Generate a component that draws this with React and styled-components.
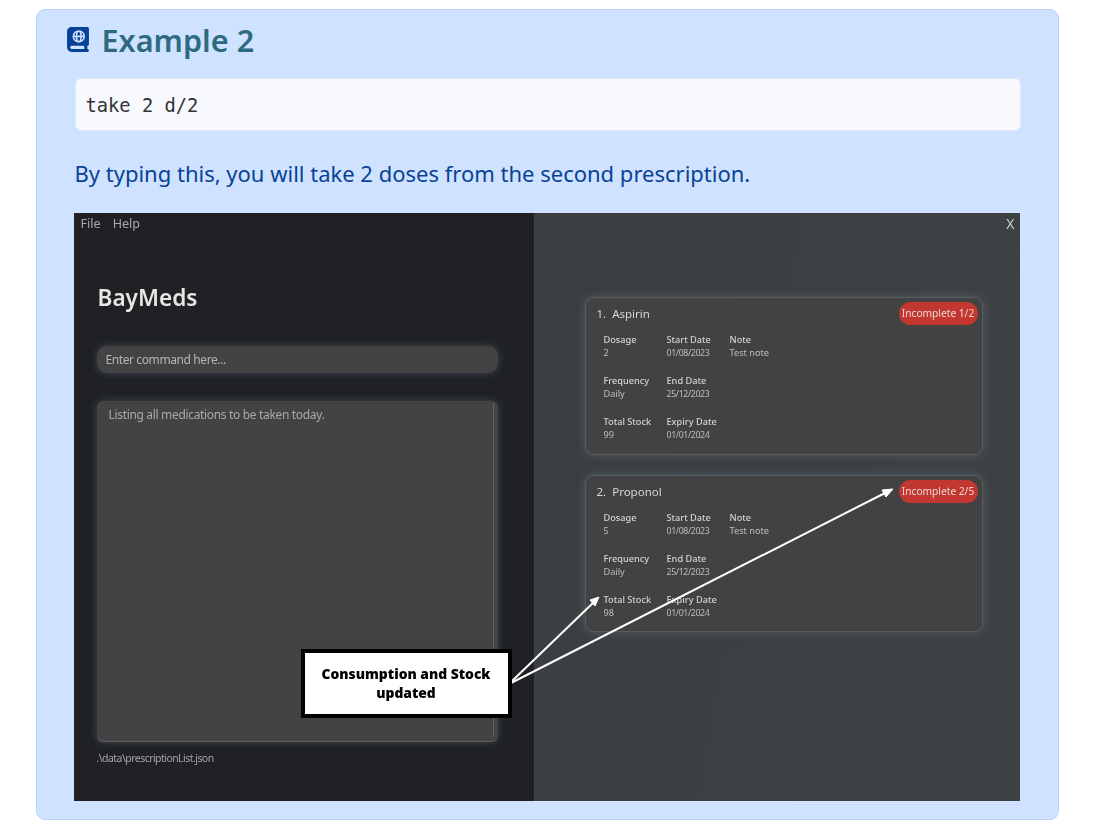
import React from "react";
import styled, { createGlobalStyle } from "styled-components";
import { FaBookAtlas } from "react-icons/fa6";

const GlobalStyle = createGlobalStyle`
  html, body {
    margin: 0;
    padding: 0;
    background: #fff;
    font-family: "Noto Sans", "Open Sans", sans-serif;
  }
`;

const Panel = styled.section`
  margin: 9px 42px 18px 36px;
  width: 1023px;
  height: 811px;
  box-sizing: border-box;
  padding: 10px 37.5px 0 37.5px;
  background: #cfe2ff;
  border: 1.5px solid #b9d5ff;
  border-radius: 9px;
`;

const Heading = styled.h2`
  display: flex;
  align-items: center;
  gap: 13px;
  height: 40px;
  margin: 0 0 18px -8px;
  font-size: 30.6px;
  line-height: 40px;
  font-weight: 600;
  color: #2f6b80;

  svg {
    width: 22px;
    height: 25px;
    color: #084298;
    margin-top: -1px;
  }
`;

const CodeBlock = styled.pre`
  margin: 0 0 24px 0;
  height: 53px;
  box-sizing: border-box;
  padding: 1px 10px 0;
  display: flex;
  align-items: center;
  background: #f8f9fe;
  border: 1px solid #e3e9f6;
  border-radius: 6px;
  font-family: "DejaVu Sans Mono", "Liberation Mono", monospace;
  font-size: 18.75px;
  color: #333;
`;

const Lead = styled.p`
  margin: 0 0 22px 0;
  height: 36px;
  line-height: 36px;
  font-size: 22px;
  color: #084298;
`;

const Shot = styled.div`
  position: relative;
  display: flex;
  width: 946px;
  height: 588px;
  margin-left: -1px;
  filter: blur(0.35px);
`;

const LeftPane = styled.div`
  width: 460px;
  box-sizing: border-box;
  padding: 0 36px 0 23px;
  background: #1f2124;
  display: flex;
  flex-direction: column;
`;

const MenuBar = styled.div`
  display: flex;
  gap: 12px;
  height: 22px;
  margin-left: -16px;
  font-size: 12.6px;
  line-height: 22px;
  color: #a9a9a9;
`;

const Brand = styled.div`
  margin: 47px 0 0 1px;
  height: 32px;
  line-height: 32px;
  font-size: 22.6px;
  font-weight: 600;
  color: #e8e6e3;
`;

const glow = "0 0 9px rgba(135, 165, 185, 0.3)";

const CommandBox = styled.div`
  margin-top: 32px;
  height: 27px;
  box-sizing: border-box;
  padding-left: 9px;
  line-height: 27px;
  font-size: 12px;
  letter-spacing: -0.4px;
  color: #b5b5b5;
  background: #434343;
  border-radius: 10px;
  box-shadow: ${glow};
`;

const ResultBox = styled.div`
  position: relative;
  margin-top: 28px;
  height: 341px;
  box-sizing: border-box;
  padding: 5px 12px;
  font-size: 12px;
  letter-spacing: -0.33px;
  line-height: 18px;
  color: #a8a8a8;
  background: #434343;
  border-bottom: 1px solid #5d5f60;
  border-radius: 6px;
  box-shadow: ${glow};

  &::after {
    content: "";
    position: absolute;
    top: 2px;
    bottom: 4px;
    right: 4px;
    width: 1px;
    background: #626466;
  }
`;

const FilePath = styled.div`
  margin-top: 8px;
  font-size: 10.5px;
  letter-spacing: -0.55px;
  line-height: 16px;
  color: #a3a3a3;
`;

const RightPane = styled.div`
  flex: 1;
  box-sizing: border-box;
  padding: 0 37px 0 50px;
  background: linear-gradient(100deg, #3b3e40, #3f4244);
  border-left: 1px solid #404345;
  display: flex;
  flex-direction: column;
  gap: 20px;
`;

const CloseRow = styled.div`
  height: 64px;
  margin-right: -32px;
  text-align: right;
  font-size: 14px;
  line-height: 22px;
  color: #d0d0d0;
`;

const Card = styled.article`
  height: ${(p) => p.$height}px;
  box-sizing: border-box;
  padding: 4px 4px 0 11px;
  background: #424242;
  border: 1px solid #565b5e;
  border-radius: 9px;
  box-shadow: ${glow};
`;

const CardHead = styled.div`
  display: flex;
  justify-content: space-between;
  align-items: center;
  height: 23px;
  margin-bottom: 8px;
`;

const CardTitle = styled.div`
  display: flex;
  gap: 6px;
  margin-top: -1px;
  font-size: 11.5px;
  color: #d6d6d6;
`;

const Badge = styled.span`
  height: 23px;
  width: 79px;
  text-align: center;
  line-height: 23px;
  border-radius: 12px;
  background: #c2372f;
  color: #efd8d4;
  font-size: 10.2px;
`;

const Details = styled.div`
  display: grid;
  grid-template-columns: 63px 63px 80px;
  grid-auto-rows: 41px;
  margin-left: 7px;
`;

const Field = styled.div`
  font-size: 9.2px;
  line-height: 13px;
  color: #bdbdbd;

  strong {
    display: block;
    font-weight: 500;
    color: #d3d3d3;
  }
`;

const DateValue = styled.span`
  font-size: 8.8px;
  letter-spacing: -0.4px;
`;

const Callout = styled.div`
  position: absolute;
  left: 227px;
  top: 436px;
  width: 211px;
  height: 69px;
  box-sizing: border-box;
  padding: 0 12px;
  display: flex;
  align-items: center;
  justify-content: center;
  text-align: center;
  background: #fff;
  border: 4.5px solid #000;
  font-family: "Open Sans", "Noto Sans", sans-serif;
  font-size: 13.85px;
  line-height: 18.5px;
  font-weight: 800;
  color: #000;
`;

const Arrows = styled.svg`
  position: absolute;
  inset: 0;
  width: 946px;
  height: 588px;
  pointer-events: none;
`;

const cards = [
  {
    index: "1.",
    name: "Aspirin",
    height: 158,
    badge: "Incomplete 1/2",
    dosage: "2",
    stock: "99",
  },
  {
    index: "2.",
    name: "Proponol",
    height: 157,
    badge: "Incomplete 2/5",
    dosage: "5",
    stock: "98",
  },
];

function MedCard({ med }) {
  return (
    <Card $height={med.height}>
      <CardHead>
        <CardTitle>
          <span>{med.index}</span>
          <span>{med.name}</span>
        </CardTitle>
        <Badge>{med.badge}</Badge>
      </CardHead>
      <Details>
        <Field><strong>Dosage</strong>{med.dosage}</Field>
        <Field><strong>Start Date</strong><DateValue>01/08/2023</DateValue></Field>
        <Field><strong>Note</strong>Test note</Field>
        <Field><strong>Frequency</strong>Daily</Field>
        <Field><strong>End Date</strong><DateValue>25/12/2023</DateValue></Field>
        <span />
        <Field><strong>Total Stock</strong>{med.stock}</Field>
        <Field><strong>Expiry Date</strong><DateValue>01/01/2024</DateValue></Field>
      </Details>
    </Card>
  );
}

export default function App() {
  return (
    <>
      <GlobalStyle />
      <Panel>
        <Heading>
          <FaBookAtlas />
          Example 2
        </Heading>
        <CodeBlock>take 2 d/2</CodeBlock>
        <Lead>By typing this, you will take 2 doses from the second prescription.</Lead>
        <Shot>
          <LeftPane>
            <MenuBar>
              <span>File</span>
              <span>Help</span>
            </MenuBar>
            <Brand>BayMeds</Brand>
            <CommandBox>Enter command here...</CommandBox>
            <ResultBox>Listing all medications to be taken today.</ResultBox>
            <FilePath>.\data\prescriptionList.json</FilePath>
          </LeftPane>
          <RightPane>
            <CloseRow>X</CloseRow>
            {cards.map((med) => (
              <MedCard key={med.index} med={med} />
            ))}
          </RightPane>
          <Arrows viewBox="0 0 946 588">
            <g stroke="#fff" strokeWidth="2" fill="#fff">
              <line x1="437" y1="469" x2="521" y2="388" />
              <line x1="437" y1="470" x2="813" y2="279" />
              <polygon points="525,384 521,393 516,387" strokeWidth="1" />
              <polygon points="819,276 812,284 808,277" strokeWidth="1" />
            </g>
          </Arrows>
          <Callout>Consumption and Stock updated</Callout>
        </Shot>
      </Panel>
    </>
  );
}
